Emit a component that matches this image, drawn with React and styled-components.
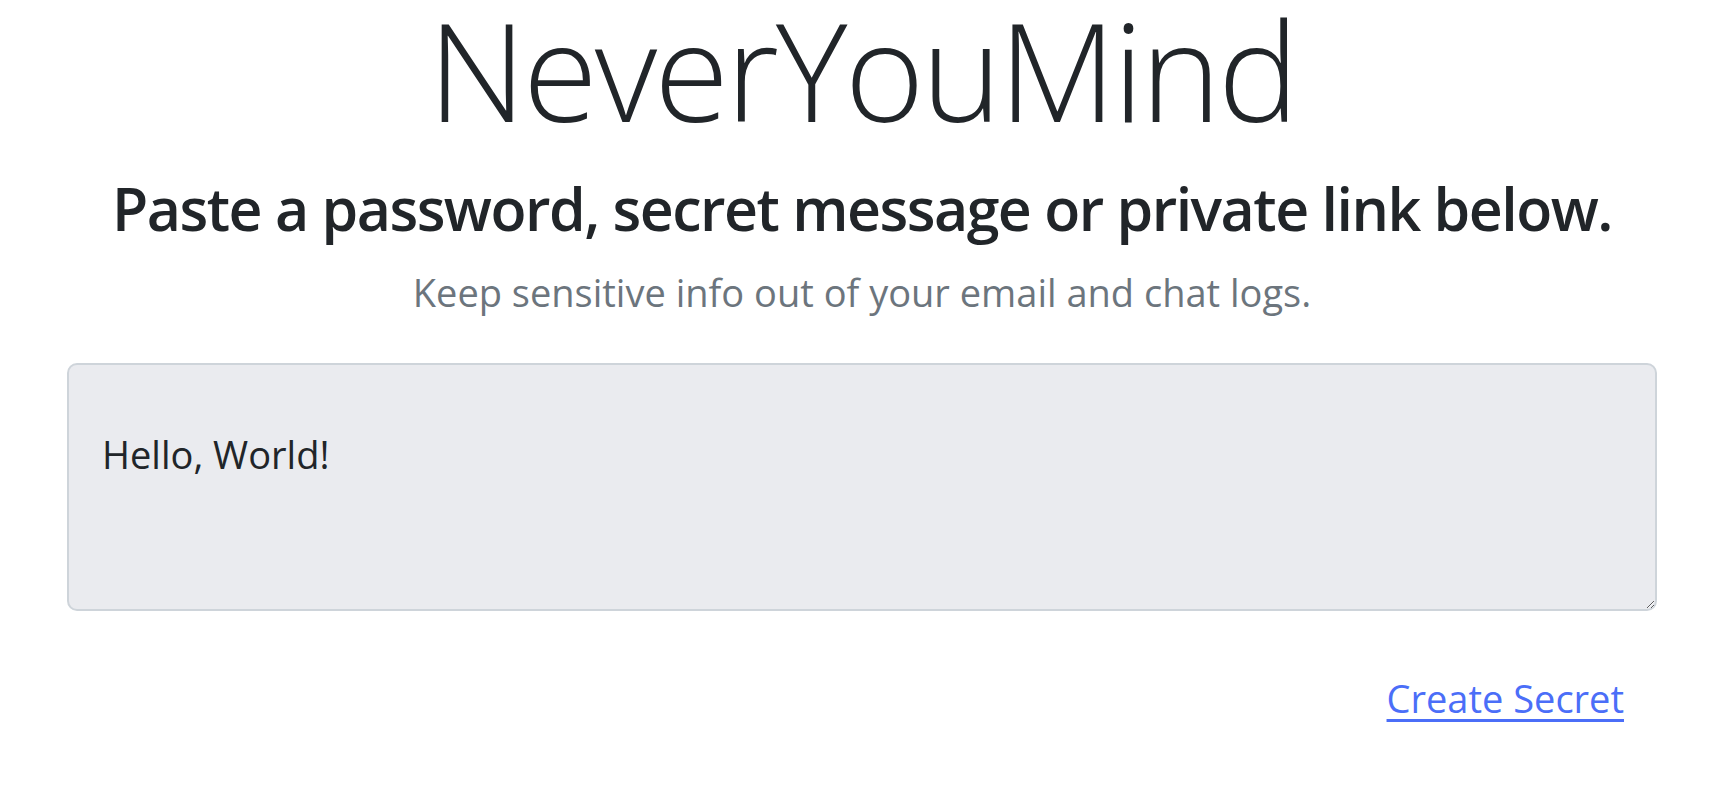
import styled, { createGlobalStyle } from "styled-components";

const GlobalStyle = createGlobalStyle`
    body {
        margin: 0;
        background: #fff;
        font-family: "Open Sans", "Noto Sans", sans-serif;
        color: #212529;
    }
`;

const Page = styled.main`
    width: 1724px;
    padding: 0 67px;
    box-sizing: border-box;
    display: flex;
    flex-direction: column;
    align-items: stretch;
    text-align: center;
`;

const Title = styled.h1`
    margin: 2px 0 0;
    font-size: 136px;
    font-weight: 300;
    line-height: 136px;
    letter-spacing: -3px;
    color: #212529;
`;

const Heading = styled.h2`
    margin: 35px 0 0;
    font-size: 59px;
    font-weight: 600;
    line-height: 71px;
    letter-spacing: -1.5px;
    color: #212529;
`;

const Lead = styled.p`
    margin: 20px 0 0;
    font-size: 38px;
    font-weight: 400;
    line-height: 57px;
    color: #6c757d;
`;

const SecretBox = styled.textarea`
    margin-top: 42px;
    height: 248px;
    box-sizing: border-box;
    padding: 61px 33px 0;
    border: 2px solid #ced4da;
    border-radius: 10px;
    background: #eaebef;
    color: #212529;
    font-family: "Open Sans", "Noto Sans", sans-serif;
    font-size: 38px;
    font-weight: 400;
    line-height: 57px;
    resize: vertical;
    outline: none;
`;

const Actions = styled.div`
    display: flex;
    justify-content: flex-end;
    margin-top: 59px;
    padding-right: 33px;
`;

const LinkButton = styled.a`
    font-size: 38px;
    line-height: 57px;
    font-weight: 400;
    color: #4b6ef8;
    text-decoration: underline;
    text-underline-offset: 6px;
    text-decoration-thickness: 3px;
    cursor: pointer;
`;

export default function App() {
    return (
        <>
            <GlobalStyle />
            <Page>
                <Title>NeverYouMind</Title>
                <Heading>Paste a password, secret message or private link below.</Heading>
                <Lead>Keep sensitive info out of your email and chat logs.</Lead>
                <SecretBox defaultValue="Hello, World!" />
                <Actions>
                    <LinkButton href="#">Create Secret</LinkButton>
                </Actions>
            </Page>
        </>
    );
}
